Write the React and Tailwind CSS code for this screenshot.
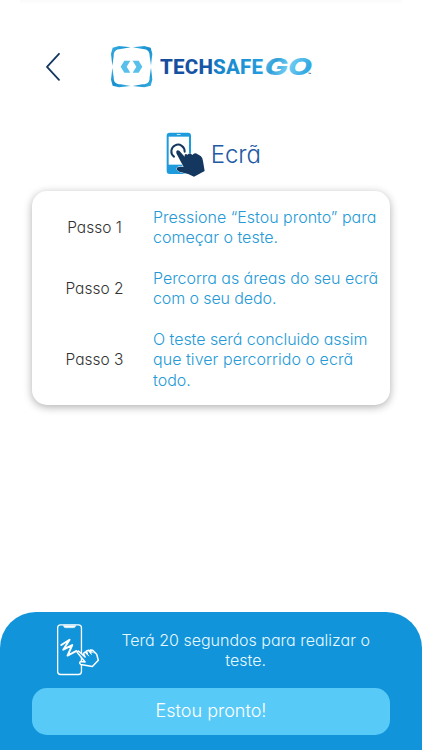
import React from 'react';

const steps = [
    { label: 'Passo 1', lines: [['Pressione “Estou pronto” para', 'tracking-[0px]'], ['começar o teste.', 'tracking-[0px]']] },
    { label: 'Passo 2', lines: [['Percorra as áreas do seu ecrã', 'tracking-[-0.04px]'], ['com o seu dedo.', 'tracking-[-0.1px]']] },
    { label: 'Passo 3', lines: [['O teste será concluido assim', 'tracking-[-0.04px]'], ['que tiver percorrido o ecrã', 'tracking-[0.05px]'], ['todo.', 'tracking-[0px]']] },
];

const BackIcon = () => (
    <svg width="16" height="30" viewBox="0 0 16 30" fill="none" stroke="#14375f" strokeWidth="1.8" strokeLinecap="round" strokeLinejoin="round">
        <path d="M14 1.8 L2 14.8 L14 27.8" />
    </svg>
);

const Logo = () => (
    <svg width="204" height="44" viewBox="0 0 204 44">
        <defs>
            <linearGradient id="corner" x1="0" y1="0" x2="1" y2="1">
                <stop offset="0" stopColor="#39b0e4" />
                <stop offset="0.5" stopColor="#168fd0" />
                <stop offset="1" stopColor="#39b0e4" />
            </linearGradient>
            <linearGradient id="word" x1="0" y1="0" x2="1" y2="0">
                <stop offset="0" stopColor="#164b9c" />
                <stop offset="0.48" stopColor="#1458a9" />
                <stop offset="0.56" stopColor="#1786cb" />
                <stop offset="1" stopColor="#249dde" />
            </linearGradient>
            <linearGradient id="go" x1="0" y1="0" x2="1" y2="0.3">
                <stop offset="0" stopColor="#76cdf2" />
                <stop offset="0.3" stopColor="#2f9fd9" />
                <stop offset="0.6" stopColor="#72cdf3" />
                <stop offset="1" stopColor="#33a8e2" />
            </linearGradient>
        </defs>
        <g transform="scale(0.33333) translate(-240 -30)" fill="url(#corner)">
            <path d="M247 92 L243 56 L248 38 L267 33 L302 37 L272 42 C256 43 251 49 251 64 Z" />
            <path d="M363 92 L367 56 L362 38 L343 33 L308 37 L338 42 C354 43 359 49 359 64 Z" />
            <path d="M247 98 L243 134 L248 152 L267 157 L302 153 L272 148 C256 147 251 141 251 126 Z" />
            <path d="M363 98 L367 134 L362 152 L343 157 L308 153 L338 148 C354 147 359 141 359 126 Z" />
            <path d="M283 77 H301 L290 95 L301 113 H283 L272 95 Z" fill="#58c0eb" />
            <path d="M326 77 H308 L319 95 L308 113 H326 L337 95 Z" fill="#58c0eb" />
        </g>
        <text x="50" y="29.3" textLength="103" lengthAdjust="spacing" fontFamily="Roboto, sans-serif" fontWeight="800" fontSize="20.5" fill="url(#word)">TECHSAFE</text>
        <text x="154.5" y="29.8" textLength="47.5" lengthAdjust="spacingAndGlyphs" fontFamily="Inter, sans-serif" fontStyle="italic" fontWeight="800" fontSize="23.5" fill="url(#go)">GO</text>
        <text x="198" y="31" fontFamily="Roboto, sans-serif" fontSize="5" fontWeight="700" fill="#14375f">™</text>
    </svg>
);

const TouchIcon = () => (
    <svg width="41.67" height="46.67" viewBox="45 33 125 140">
        <rect x="50" y="38" width="73" height="124" rx="9" fill="#1d9bdc" />
        <rect x="56" y="50" width="61" height="84" fill="#fff" />
        <rect x="80" y="42" width="12" height="3" rx="1.5" fill="#b8e4f8" />
        <path d="M72 110 A20 20 0 1 1 104 95" fill="none" stroke="#14375f" strokeWidth="6" strokeLinecap="round" />
        <path d="M79 94 Q82 88 88 92 L104 110 Q102 98 113 104 Q119 97 127 105 Q134 96 143 103 L152 108 Q158 112 159 123 L164 153 L132 170 Q116 161 94 157 Q80 153 80 146 Q81 138 101 141 L79 100 Z" fill="#14375f" stroke="#fff" strokeWidth="3" strokeLinejoin="round" paintOrder="stroke" />
    </svg>
);

const SwipeIcon = () => (
    <svg width="46.67" height="55" viewBox="165 65 140 165" fill="none" stroke="#fff" strokeLinecap="round" strokeLinejoin="round">
        <rect x="173" y="73" width="72" height="150" rx="9" strokeWidth="4" />
        <path d="M190 75 Q191 82 197 82 H221 Q227 82 228 75 Z" fill="#fff" strokeWidth="1" />
        <path d="M184 134 L209 118 L190 148 L217 134 L203 166 L230 152" strokeWidth="6" />
        <path d="M232 156 L236 152 L256 170 L251 159 L257 155 L263 162 L260 152 L267 150 L274 157 L272 149 L279 150 L291 162 L296 180 L278 199 L243 193 Q237 188 242 184 L256 185 Z" fill="#1194d9" strokeWidth="4.5" />
        <path d="M257 156 L267 167 M266 151 L275 162 M274 151 L281 158" strokeWidth="3" />
    </svg>
);

const App = () => {
    return (
        <div className="w-[422px] h-[750px] bg-white flex flex-col overflow-hidden font-[Inter,sans-serif] font-light [font-feature-settings:'cv11']">
            <div className="h-[4px] shrink-0 mx-5 bg-linear-to-b from-[#fafafa] to-white"></div>
            <header className="flex items-start h-[127px] pt-[41px] pl-[45px] shrink-0">
                <button className="mt-[7px] w-[65px]" aria-label="Voltar">
                    <BackIcon />
                </button>
                <Logo />
            </header>

            <div className="flex items-start pl-[165px] h-[60px] shrink-0">
                <TouchIcon />
                <h1 className="ml-[4px] mt-[7px] text-[24px] leading-[34px] text-[#2159a3]">Ecrã</h1>
            </div>

            {/* Steps */}
            <main className="mx-8 h-[213.5px] shrink-0 rounded-[15px] bg-white shadow-[0_2px_8px_rgba(0,0,0,0.32)] pt-[15.5px] flex flex-col gap-[20px]">
                {steps.map((step) => (
                    <div key={step.label} className="flex items-center">
                        <div className="w-[121px] pl-[4px] pt-[1.5px] text-center text-[15.5px] leading-[20.5px] text-[#333]">{step.label}</div>
                        <p className="text-[16px] leading-[20.5px] text-[#259ad6] whitespace-nowrap">
                            {step.lines.map(([text, tracking]) => (
                                <span key={text} className={`block ${tracking}`}>{text}</span>
                            ))}
                        </p>
                    </div>
                ))}
            </main>

            <footer className="mt-auto h-[138px] shrink-0 rounded-t-[36px] bg-[#1194d9] px-8 pt-[9.5px]">
                <div className="flex h-[66.5px] pl-[23px]">
                    <SwipeIcon />
                    <p className="w-[291px] pt-[8px] text-center text-[16px] leading-[20.5px] text-[#e6f8ff]">
                        Terá 20 segundos para realizar o<br />teste.
                    </p>
                </div>
                <button className="block w-full h-[47px] rounded-[15px] bg-[#58caf7] text-[18px] leading-[22px] pb-[2px] text-white">
                    Estou pronto!
                </button>
            </footer>
        </div>
    );
};

export default App;
